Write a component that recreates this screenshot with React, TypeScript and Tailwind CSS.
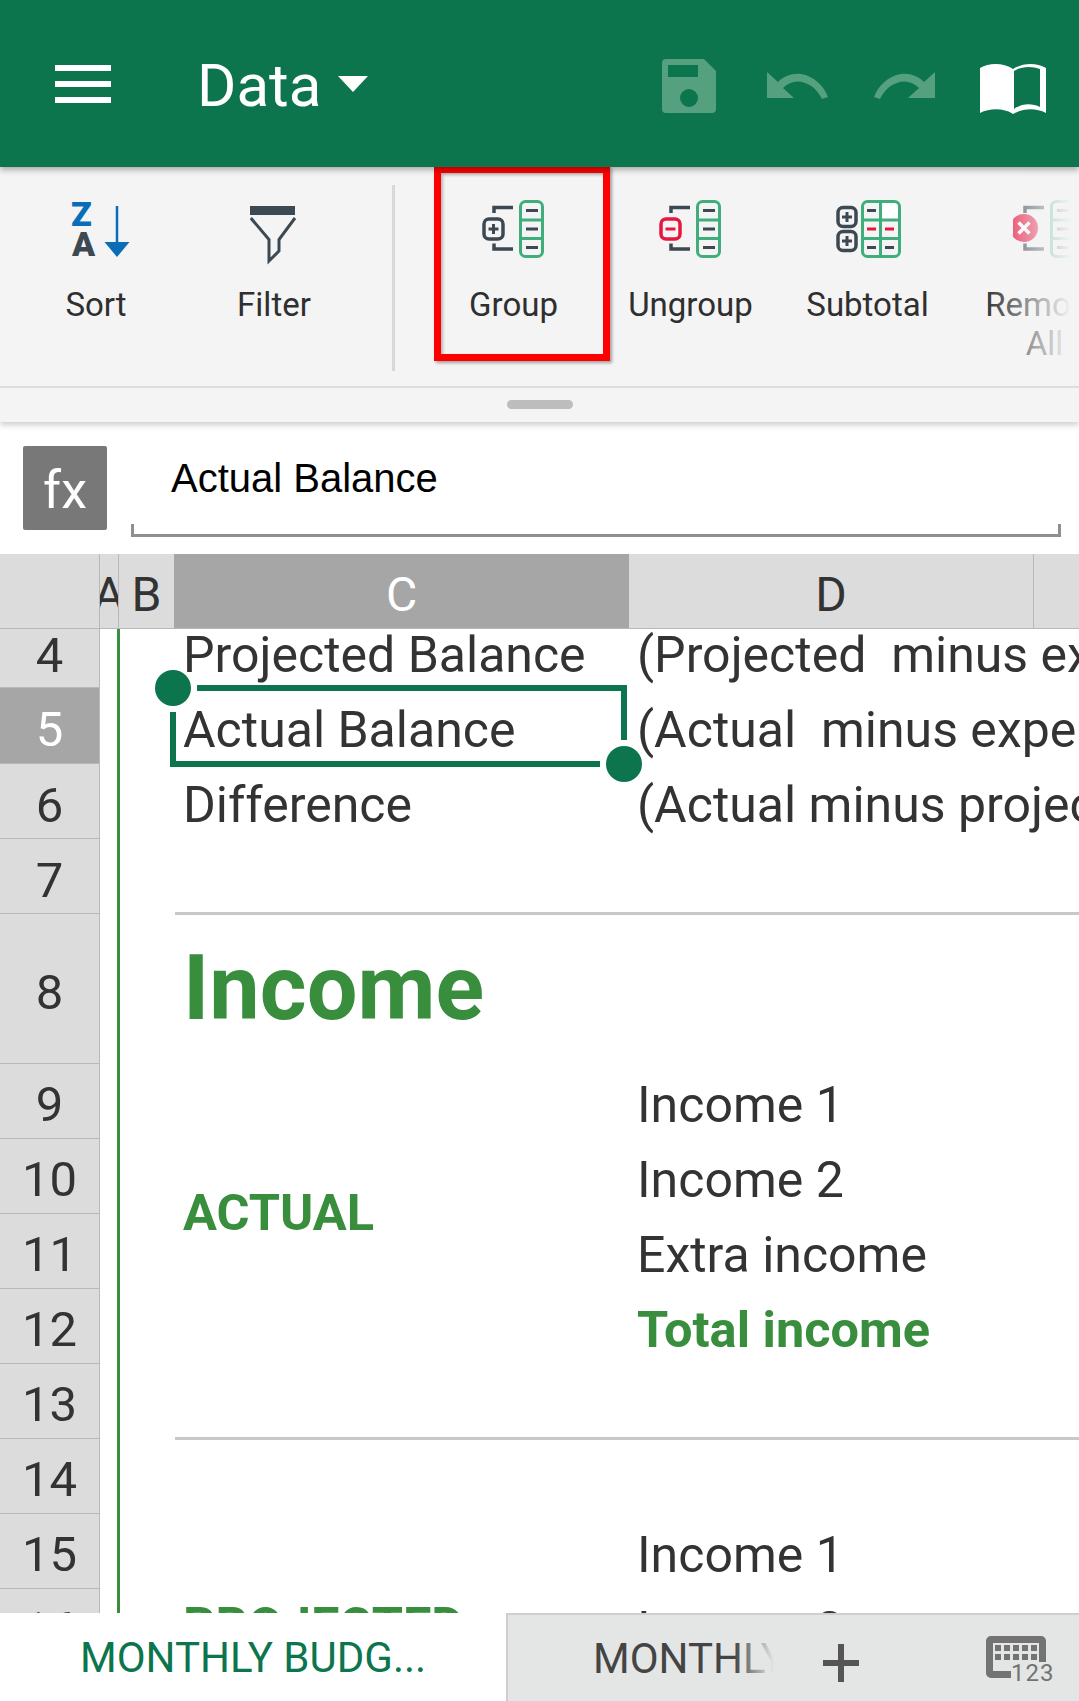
import { ReactNode } from "react";

const DARK = "#3c4852";
const GREEN = "#3fae7c";
const RED = "#e5173f";
const ICON_DIM = "#55a07e";

const UNDO_PATH = "M0 1V27H27L16 17C22 11 30 9 38 12C45 14 51 20 55 28L61 26C57 15 47 5 34 3C25 2 17 5 11 11Z";

const Bracket = () => <path d="M31 8.5H12V14M31 50H12V44.5" fill="none" stroke={DARK} strokeWidth="3.5" />;

const GroupColumn = () => (
    <>
        <rect x="38.5" y="2.5" width="22" height="55" rx="5" fill="none" stroke={GREEN} strokeWidth="3" />
        <path d="M38 21H61M38 39.5H61" stroke={GREEN} strokeWidth="3" />
        <path d="M44 11.5H56M44 30H56M44 48.5H56" stroke={DARK} strokeWidth="3" />
    </>
);

const GroupIcon = () => (
    <svg width="64" height="60" viewBox="0 0 64 60">
        <Bracket />
        <rect x="2" y="20" width="19" height="20" rx="5" fill="none" stroke={DARK} strokeWidth="3.5" />
        <path d="M6.5 30H16.5M11.5 25V35" stroke={DARK} strokeWidth="3" />
        <GroupColumn />
    </svg>
);

const UngroupIcon = () => (
    <svg width="64" height="60" viewBox="0 0 64 60">
        <Bracket />
        <rect x="2" y="20" width="19" height="20" rx="5" fill="none" stroke={RED} strokeWidth="3.5" />
        <path d="M6.5 30H16.5" stroke={RED} strokeWidth="3" />
        <GroupColumn />
    </svg>
);

const SubtotalIcon = () => (
    <svg width="66" height="60" viewBox="0 0 66 60">
        <rect x="3" y="8.5" width="18" height="19" rx="5" fill="none" stroke={DARK} strokeWidth="3.5" />
        <rect x="3" y="32.5" width="18" height="19" rx="5" fill="none" stroke={DARK} strokeWidth="3.5" />
        <path d="M7 18H17M12 13V23M7 42H17M12 37V47" stroke={DARK} strokeWidth="3" />
        <path d="M45 3H60a4 4 0 0 1 4 4V21H45Z" fill="#fff" />
        <rect x="27.5" y="2.5" width="37" height="55" rx="5" fill="none" stroke={GREEN} strokeWidth="3" />
        <path d="M27 21H65M27 39.5H65M45.5 2V58" stroke={GREEN} strokeWidth="3" />
        <path d="M32 11.5H41M32 48.5H41M50 48.5H59" stroke={DARK} strokeWidth="3" />
        <path d="M32 30H41M50 30H59" stroke={RED} strokeWidth="3" />
    </svg>
);

const RemoveIcon = () => (
    <svg width="64" height="60" viewBox="0 0 64 60">
        <Bracket />
        <circle cx="11" cy="29" r="14" fill={RED} />
        <path d="M5.5 23.5L16.5 34.5M16.5 23.5L5.5 34.5" stroke="#fff" strokeWidth="3.5" />
        <GroupColumn />
    </svg>
);

const SortIcon = () => (
    <svg width="60" height="60" viewBox="0 0 60 60" className="ml-[10px] overflow-visible">
        <text x="0" y="27" fontFamily="Roboto, sans-serif" fontWeight="900" fontSize="34" fill="#0b6db7">Z</text>
        <text x="1" y="57" fontFamily="Roboto, sans-serif" fontWeight="900" fontSize="34" fill={DARK}>A</text>
        <path d="M46 7V45" stroke="#0b6db7" strokeWidth="2.5" />
        <path d="M33.5 43H58.5L46 58Z" fill="#0b6db7" />
    </svg>
);

const FilterIcon = () => (
    <svg width="46" height="66" viewBox="0 0 46 66" className="-ml-[2px]">
        <rect x="0" y="7" width="45" height="9" fill={DARK} />
        <path d="M0.8 19L19 40.5V62L29 52V40.5L45 19" fill="none" stroke={DARK} strokeWidth="3" />
    </svg>
);

const ToolButton = ({ icon, label, className }: { icon: ReactNode; label: ReactNode; className: string }) => (
    <div className={`flex flex-col items-center shrink-0 h-[220px] ${className}`}>
        <div className="h-[60px] mt-[32px] flex items-start justify-center">{icon}</div>
        <div className="mt-[26px] text-[33px] leading-[39px] text-[#2f2f2f] text-center">{label}</div>
    </div>
);

const HeaderIcons = () => (
    <div className="flex items-start h-[61px]">
        <svg width="54" height="54" viewBox="0 0 54 54" className="mt-[6px]">
            <path
                fillRule="evenodd"
                fill={ICON_DIM}
                d="M4 0H42L54 12V50a4 4 0 0 1-4 4H4a4 4 0 0 1-4-4V4a4 4 0 0 1 4-4ZM6 6V18H36V6ZM27 30a9 9 0 1 0 0 18a9 9 0 0 0 0-18Z"
            />
        </svg>
        <svg width="61" height="28" viewBox="0 0 61 28" className="ml-[51px] mt-[18px]">
            <path fill={ICON_DIM} d={UNDO_PATH} />
        </svg>
        <svg width="61" height="28" viewBox="0 0 61 28" className="ml-[46px] mt-[18px] -scale-x-100">
            <path fill={ICON_DIM} d={UNDO_PATH} />
        </svg>
        <svg width="66" height="52" viewBox="0 0 66 52" className="ml-[45px] mt-[10px]">
            <path
                fill="#fff"
                fillRule="evenodd"
                d="M0 5C10 -1 24 0 33 6C42 0 56 -1 66 5V50C56 45 44 45 33 51C24 45 10 45 0 50ZM34 8V46C42 40 52 40 60 44V6C52 3 42 3 34 8Z"
            />
        </svg>
    </div>
);

const KeyboardIcon = () => (
    <svg width="60" height="42" viewBox="0 0 60 42">
        <path
            fill="#737373"
            d="M5 0H55a5 5 0 0 1 5 5V26H53V7H7V35H25V42H5a5 5 0 0 1-5-5V5a5 5 0 0 1 5-5Z"
        />
        <path
            fill="#737373"
            d="M9 9h6v6h-6ZM18 9h6v6h-6ZM27 9h6v6h-6ZM36 9h6v6h-6ZM45 9h6v6h-6ZM9 18h6v6h-6ZM18 18h6v6h-6ZM27 18h6v6h-6ZM36 18h6v6h-6ZM45 18h6v6h-6Z"
        />
    </svg>
);

const rowHeaders = [
    { n: 4, h: "h-[59px] pb-[4px]" },
    { n: 5, h: "h-[76px] pt-[9px]", active: true },
    { n: 6, h: "h-[75px] pt-[9px]" },
    { n: 7, h: "h-[75px] pt-[9px]" },
    { n: 8, h: "h-[150px] pt-[9px]" },
    { n: 9, h: "h-[75px] pt-[7px]" },
    { n: 10, h: "h-[75px] pt-[7px]" },
    { n: 11, h: "h-[75px] pt-[7px]" },
    { n: 12, h: "h-[75px] pt-[7px]" },
    { n: 13, h: "h-[75px] pt-[7px]" },
    { n: 14, h: "h-[75px] pt-[7px]" },
    { n: 15, h: "h-[75px] pt-[7px]" },
    { n: 16, h: "h-[75px] pt-[7px]" },
];

const Cell = ({ className, children }: { className: string; children?: ReactNode }) => (
    <div className={`flex items-center pl-[9px] whitespace-pre text-[50px] leading-[60px] text-[#333333] ${className}`}>
        {children}
    </div>
);

const textCell = "pt-[6px]";

export default function App() {
    return (
        <div className="w-[1079px] h-[1701px] flex flex-col overflow-hidden bg-white font-['Roboto',sans-serif]">
            {/* top bar */}
            <header className="relative z-20 h-[167px] shrink-0 bg-[#0c754d] flex items-center pl-[55px] pr-[33px] shadow-[0_3px_6px_rgba(0,0,0,0.3)]">
                <div className="w-[56px] flex flex-col gap-[10px]">
                    <div className="h-[6px] bg-white" />
                    <div className="h-[6px] bg-white" />
                    <div className="h-[6px] bg-white" />
                </div>
                <span className="ml-[86px] pt-[4px] text-[60px] leading-[70px] text-white">Data</span>
                <div className="ml-[17px] w-0 h-0 border-x-[15px] border-x-transparent border-t-[16px] border-t-white" />
                <div className="ml-auto">
                    <HeaderIcons />
                </div>
            </header>

            {/* ribbon */}
            <section className="relative z-10 h-[255px] shrink-0 bg-[#f4f4f4] shadow-[0_3px_6px_rgba(0,0,0,0.2)] overflow-hidden">
                <div className="relative flex h-[221px] border-b-2 border-[#dddddd] pl-[7px]">
                    <ToolButton className="w-[178px]" icon={<SortIcon />} label="Sort" />
                    <ToolButton className="w-[178px]" icon={<FilterIcon />} label="Filter" />
                    <div className="ml-[29px] mt-[18px] w-[3px] h-[186px] bg-[#d8d8d8] shrink-0" />
                    <ToolButton className="w-[177px] ml-[30px]" icon={<GroupIcon />} label="Group" />
                    <ToolButton className="w-[177px]" icon={<UngroupIcon />} label="Ungroup" />
                    <ToolButton className="w-[177px]" icon={<SubtotalIcon />} label="Subtotal" />
                    <ToolButton className="w-[177px]" icon={<RemoveIcon />} label={<>Remove<br />All</>} />
                    <div className="absolute left-[434px] top-[-1px] w-[176px] h-[195px] border-[7px] border-[#ff0000] shadow-[2px_2px_3px_rgba(0,0,0,0.35),inset_2px_2px_3px_rgba(0,0,0,0.25)]" />
                    <div className="absolute right-0 top-0 w-[96px] h-[219px] bg-gradient-to-r from-transparent to-[#f4f4f4] to-[92%]" />
                </div>
                <div className="flex justify-center pt-[12px]">
                    <div className="w-[66px] h-[9px] rounded-full bg-[#bdbdbd]" />
                </div>
            </section>

            {/* formula bar */}
            <section className="h-[132px] shrink-0 flex pl-[23px] pt-[24px] bg-white">
                <div className="w-[84px] h-[84px] pt-[6px] rounded-[2px] bg-[#787878] flex items-center justify-center text-white text-[52px] leading-none">fx</div>
                <div className="relative ml-[24px] w-[930px] h-[88px]">
                    <div className="pl-[40px] text-[40px] leading-[64px] text-black font-['Liberation_Sans',sans-serif]">Actual Balance</div>
                    <div className="absolute left-0 right-0 bottom-[-3px] h-[13px] border-x-[3px] border-b-[3px] border-[#8f8f8f]" />
                </div>
            </section>

            {/* column headers */}
            <div className="h-[75px] shrink-0 flex bg-[#dcdcdc] border-b border-[#b8b8b8] text-[48px] leading-[74px] text-[#333333] text-center">
                <div className="w-[100px] border-r border-[#b8b8b8]" />
                <div className="w-[19px] border-r border-[#b8b8b8] overflow-hidden flex justify-center pt-[4px]">A</div>
                <div className="w-[55px] pt-[4px]">B</div>
                <div className="w-[455px] pt-[4px] bg-[#a6a6a6] text-white">C</div>
                <div className="w-[405px] pt-[4px] border-r border-[#b8b8b8]">D</div>
            </div>

            {/* sheet */}
            <div className="flex-1 min-h-0 flex overflow-hidden">
                <div className="w-[100px] shrink-0 border-r border-[#b8b8b8]">
                    {rowHeaders.map((row) => (
                        <div
                            key={row.n}
                            className={`${row.h} flex items-center justify-center border-b border-[#b8b8b8] text-[49px] ${row.active ? "bg-[#a6a6a6] text-white" : "bg-[#dcdcdc] text-[#333333]"}`}
                        >
                            {row.n}
                        </div>
                    ))}
                </div>
                <div className="flex-1 grid grid-cols-[20px_54px_454px_451px] grid-rows-[59px_76px_75px_75px_150px_75px_75px_75px_75px_75px_75px_75px_75px] overflow-hidden">
                    <div className="col-start-1 row-start-1 row-span-13 border-r-[3px] border-[#388e3c]" />

                    <Cell className="col-start-3 row-start-1 !items-end pb-[3px]">Projected Balance</Cell>
                    <Cell className="col-start-4 row-start-1 !items-end pb-[3px]">(Projected  minus expenses)</Cell>

                    <div className="relative col-start-3 row-start-2 flex items-center pl-[9px] pt-[8px] text-[50px] leading-[60px] text-[#333333]">
                        Actual Balance
                        <div className="absolute left-[23px] right-[1px] top-[-3px] h-[6px] bg-[#0c754d]" />
                        <div className="absolute right-[1px] top-[-3px] bottom-[24px] w-[6px] bg-[#0c754d]" />
                        <div className="absolute left-[-4px] top-[24px] bottom-[-3px] w-[6px] bg-[#0c754d]" />
                        <div className="absolute left-[-4px] right-[28px] bottom-[-3px] h-[6px] bg-[#0c754d]" />
                        <div className="absolute left-[-19px] top-[-18px] w-[36px] h-[36px] rounded-full bg-[#0c754d]" />
                        <div className="absolute right-[-14px] bottom-[-18px] w-[36px] h-[36px] rounded-full bg-[#0c754d]" />
                    </div>
                    <Cell className="col-start-4 row-start-2 pt-[8px]">(Actual  minus expenses)</Cell>

                    <Cell className={`col-start-3 row-start-3 ${textCell}`}>Difference</Cell>
                    <Cell className={`col-start-4 row-start-3 ${textCell}`}>(Actual minus projected)</Cell>

                    <div className="col-start-3 col-span-2 row-start-4 ml-[1px] -mb-[1px] border-b-[3px] border-[#c8c8c8]" />

                    <Cell className="col-start-3 row-start-5 !text-[90px] !leading-[100px] !text-[#388e3c] font-bold">Income</Cell>

                    <Cell className={`col-start-4 row-start-6 ${textCell}`}>Income 1</Cell>
                    <Cell className="col-start-3 row-start-7 row-span-2 pb-[2px] !text-[50.5px] !text-[#388e3c] font-bold">ACTUAL</Cell>
                    <Cell className={`col-start-4 row-start-7 ${textCell}`}>Income 2</Cell>
                    <Cell className={`col-start-4 row-start-8 ${textCell}`}>Extra income</Cell>
                    <Cell className={`col-start-4 row-start-9 !text-[#388e3c] font-bold !text-[50.5px] ${textCell}`}>Total income</Cell>

                    <div className="col-start-3 col-span-2 row-start-10 ml-[1px] -mb-[1px] border-b-[3px] border-[#c8c8c8]" />

                    <Cell className={`col-start-4 row-start-12 ${textCell}`}>Income 1</Cell>
                    <Cell className="col-start-3 row-start-13 row-span-2 pb-[2px] !text-[50.5px] !text-[#388e3c] font-bold">PROJECTED</Cell>
                    <Cell className={`col-start-4 row-start-13 ${textCell}`}>Income 2</Cell>
                </div>
            </div>

            {/* sheet tabs */}
            <footer className="relative z-10 h-[88px] shrink-0 flex bg-white">
                <div className="w-[506px] flex items-center pl-[80px] pt-[1px] text-[42px] text-[#0c754d]">MONTHLY BUDG...</div>
                <div className="flex-1 flex items-center bg-[#e4e6e5] border-l-2 border-t-2 border-[#cfcfcf]">
                    <div className="relative ml-[85px] w-[181px] overflow-hidden whitespace-nowrap text-[42px] text-[#444444]">
                        MONTHLY BUDGET
                        <div className="absolute right-0 top-0 bottom-0 w-[40px] bg-gradient-to-r from-transparent to-[#e4e6e5]" />
                    </div>
                    <svg width="36" height="38" viewBox="0 0 36 38" className="ml-[49px] mt-[10px]">
                        <path d="M18 0V38M0 19H36" stroke="#555555" strokeWidth="6" />
                    </svg>
                    <div className="ml-auto mr-[33px] relative w-[60px] h-[42px] -mt-[3px]">
                        <KeyboardIcon />
                        <span className="absolute left-[25px] top-[27px] text-[24px] leading-[20px] tracking-[1px] text-[#737373]">123</span>
                    </div>
                </div>
            </footer>
        </div>
    );
}
